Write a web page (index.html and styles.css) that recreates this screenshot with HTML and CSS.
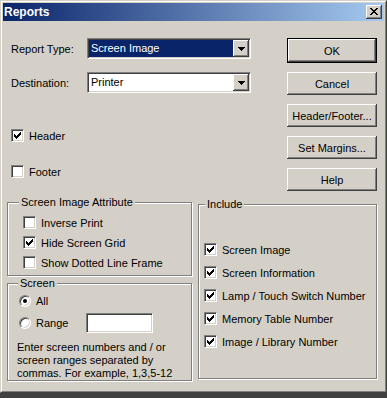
FILE: index.html
```html
<!DOCTYPE html>
<html lang="en">
<head>
  <meta charset="UTF-8" />
  <title>Reports</title>
  <link rel="stylesheet" href="styles.css">
</head>
<body>
  <div class="window">
    <div class="frame">
      <div class="titlebar">
        <span class="title">Reports</span>
        <span class="close">
          <svg width="8" height="7" viewBox="0 0 8 7"><path d="M0 0h2v1h-2zM6 0h2v1h-2zM1 1h2v1h-2zM5 1h2v1h-2zM2 2h4v1h-4zM3 3h2v1h-2zM2 4h4v1h-4zM1 5h2v1h-2zM5 5h2v1h-2zM0 6h2v1h-2zM6 6h2v1h-2z" fill="#000"/></svg>
        </span>
      </div>

      <div class="content">
        <div class="top">
          <div class="top-left">
            <div class="field-row">
              <span class="field-label">Report Type:</span>
              <div class="combo selected">
                <span class="combo-text">Screen Image</span>
                <span class="drop"><svg width="7" height="4" viewBox="0 0 7 4"><path d="M0 0h7v1h-7zM1 1h5v1h-5zM2 2h3v1h-3zM3 3h1v1h-1z" fill="#000"/></svg></span>
              </div>
            </div>
            <div class="field-row second">
              <span class="field-label">Destination:</span>
              <div class="combo">
                <span class="combo-text">Printer</span>
                <span class="drop"><svg width="7" height="4" viewBox="0 0 7 4"><path d="M0 0h7v1h-7zM1 1h5v1h-5zM2 2h3v1h-3zM3 3h1v1h-1z" fill="#000"/></svg></span>
              </div>
            </div>
            <div class="check-row header-row"><span class="checkbox"><svg width="7" height="7" viewBox="0 0 7 7"><path d="M6 0h1v1h-1zM5 1h2v1h-2zM0 2h1v1h-1zM4 2h3v1h-3zM0 3h2v1h-2zM3 3h3v1h-3zM0 4h5v1h-5zM1 5h3v1h-3zM2 6h1v1h-1z"/></svg></span>Header</div>
            <div class="check-row footer-row"><span class="checkbox"></span>Footer</div>
          </div>
          <div class="buttons">
            <button class="btn default">OK</button>
            <button class="btn">Cancel</button>
            <button class="btn">Header/Footer...</button>
            <button class="btn">Set Margins...</button>
            <button class="btn">Help</button>
          </div>
        </div>

        <div class="bottom">
          <div class="left-groups">
            <fieldset class="group attr">
              <legend>Screen Image Attribute</legend>
              <div class="group-body">
                <div class="check-row"><span class="checkbox"></span>Inverse Print</div>
                <div class="check-row"><span class="checkbox"><svg width="7" height="7" viewBox="0 0 7 7"><path d="M6 0h1v1h-1zM5 1h2v1h-2zM0 2h1v1h-1zM4 2h3v1h-3zM0 3h2v1h-2zM3 3h3v1h-3zM0 4h5v1h-5zM1 5h3v1h-3zM2 6h1v1h-1z"/></svg></span>Hide Screen Grid</div>
                <div class="check-row"><span class="checkbox"></span>Show Dotted Line Frame</div>
              </div>
            </fieldset>
            <fieldset class="group screen">
              <legend>Screen</legend>
              <div class="group-body">
                <div class="radio-row"><span class="radio checked"></span>All</div>
                <div class="radio-row range-row"><span class="radio"></span><span class="range-label">Range</span><span class="textbox"></span></div>
                <div class="hint">Enter screen numbers and / or<br>screen ranges separated by<br>commas. For example, 1,3,5-12</div>
              </div>
            </fieldset>
          </div>
          <fieldset class="group include">
            <legend>Include</legend>
            <div class="group-body">
              <div class="check-row"><span class="checkbox"><svg width="7" height="7" viewBox="0 0 7 7"><path d="M6 0h1v1h-1zM5 1h2v1h-2zM0 2h1v1h-1zM4 2h3v1h-3zM0 3h2v1h-2zM3 3h3v1h-3zM0 4h5v1h-5zM1 5h3v1h-3zM2 6h1v1h-1z"/></svg></span>Screen Image</div>
              <div class="check-row"><span class="checkbox"><svg width="7" height="7" viewBox="0 0 7 7"><path d="M6 0h1v1h-1zM5 1h2v1h-2zM0 2h1v1h-1zM4 2h3v1h-3zM0 3h2v1h-2zM3 3h3v1h-3zM0 4h5v1h-5zM1 5h3v1h-3zM2 6h1v1h-1z"/></svg></span>Screen Information</div>
              <div class="check-row"><span class="checkbox"><svg width="7" height="7" viewBox="0 0 7 7"><path d="M6 0h1v1h-1zM5 1h2v1h-2zM0 2h1v1h-1zM4 2h3v1h-3zM0 3h2v1h-2zM3 3h3v1h-3zM0 4h5v1h-5zM1 5h3v1h-3zM2 6h1v1h-1z"/></svg></span>Lamp / Touch Switch Number</div>
              <div class="check-row"><span class="checkbox"><svg width="7" height="7" viewBox="0 0 7 7"><path d="M6 0h1v1h-1zM5 1h2v1h-2zM0 2h1v1h-1zM4 2h3v1h-3zM0 3h2v1h-2zM3 3h3v1h-3zM0 4h5v1h-5zM1 5h3v1h-3zM2 6h1v1h-1z"/></svg></span>Memory Table Number</div>
              <div class="check-row"><span class="checkbox"><svg width="7" height="7" viewBox="0 0 7 7"><path d="M6 0h1v1h-1zM5 1h2v1h-2zM0 2h1v1h-1zM4 2h3v1h-3zM0 3h2v1h-2zM3 3h3v1h-3zM0 4h5v1h-5zM1 5h3v1h-3zM2 6h1v1h-1z"/></svg></span>Image / Library Number</div>
            </div>
          </fieldset>
        </div>
      </div>
    </div>
  </div>
</body>
</html>
```
FILE: styles.css
```css
body {
  margin: 0;
  background: #404040;
  font-family: 'Liberation Sans', Arial, sans-serif;
  font-size: 11px;
  color: #000;
}
.window {
  width: 387px;
  height: 393px;
  box-sizing: border-box;
  background: #d4d0c8;
  border: 1px solid;
  border-color: #d4d0c8 #404040 #404040 #d4d0c8;
}
.frame {
  height: 100%;
  box-sizing: border-box;
  border: 1px solid;
  border-color: #fff #808080 #808080 #fff;
  padding: 1px;
}
.titlebar {
  height: 18px;
  display: flex;
  align-items: center;
  justify-content: space-between;
  padding: 0 2px 0 1px;
  background: linear-gradient(to right, #0a246a, #a6caf0);
}
.title { color: #fff; font-weight: bold; font-size: 12px; }
.close {
  width: 16px;
  height: 14px;
  background: #d4d0c8;
  box-shadow: inset -1px -1px #404040, inset 1px 1px #fff, inset -2px -2px #808080;
}
.close svg { display: block; margin: 3px 0 0 4px; }

.content { padding: 17px 0 0 4px; }
.top { display: flex; }
.top-left { width: 276px; padding-left: 4px; }
.field-row { display: flex; align-items: center; height: 21px; }
.field-row.second { margin-top: 13px; }
.field-label { width: 76px; }
.combo {
  width: 164px;
  height: 21px;
  box-sizing: border-box;
  display: flex;
  padding: 1px;
  background: #fff;
  border: 1px solid;
  border-color: #808080 #fff #fff #808080;
  box-shadow: inset 1px 1px #404040, inset -1px -1px #d4d0c8;
}
.combo-text { flex: 1; padding-left: 2px; line-height: 17px; }
.selected .combo-text { background: #0a246a; color: #fff; }
.drop {
  width: 16px;
  height: 17px;
  background: #d4d0c8;
  box-shadow: inset -1px -1px #404040, inset 1px 1px #fff, inset -2px -2px #808080;
}
.drop svg { display: block; margin: 7px 0 0 5px; }

.check-row { display: flex; align-items: center; height: 13px; gap: 5px; }
.header-row { margin-top: 36px; }
.footer-row { margin-top: 23px; }
.checkbox {
  flex: none;
  width: 13px;
  height: 13px;
  box-sizing: border-box;
  background: #fff;
  border: 1px solid;
  border-color: #808080 #fff #fff #808080;
  box-shadow: inset 1px 1px #404040, inset -1px -1px #d4d0c8;
}
.checkbox svg { display: block; margin: 2px 0 0 2px; fill: #000; }

.buttons { width: 90px; display: flex; flex-direction: column; gap: 9px; }
.btn {
  width: 90px;
  height: 23px;
  padding: 0;
  border: none;
  font: inherit;
  color: #000;
  background: #d4d0c8;
  box-shadow: inset -1px -1px #404040, inset 1px 1px #fff, inset -2px -2px #808080, inset 2px 2px #d4d0c8;
}
.btn.default { height: 25px; border: 1px solid #000; }

.bottom { display: flex; align-items: flex-start; margin-top: 5px; }
.left-groups { width: 185px; flex: none; display: flex; flex-direction: column; }
.group {
  margin: 0;
  padding: 0;
  min-width: 0;
  box-sizing: border-box;
  border: 1px solid #808080;
  box-shadow: inset 1px 1px #fff, 1px 1px #fff;
}
.group legend { padding: 0 2px; line-height: 13px; background: #d4d0c8; }
.group-body { display: flex; flex-direction: column; }

.attr { width: 185px; height: 80px; }
.attr legend { margin-left: 11px; }
.attr .group-body { padding: 7px 0 0 15px; gap: 7px; }

.screen { width: 185px; height: 104px; margin-top: 1px; }
.screen legend { margin-left: 10px; }
.screen .group-body { padding: 5px 0 0 9px; }
.radio-row { display: flex; align-items: center; height: 12px; gap: 5px; padding-left: 2px; }
.range-row { height: 20px; margin-top: 6px; }
.radio {
  flex: none;
  width: 12px;
  height: 12px;
  box-sizing: border-box;
  border-radius: 50%;
  background: #fff;
  border: 1px solid;
  border-color: #808080 #fff #fff #808080;
  box-shadow: inset 1px 1px #404040, inset -1px -1px #d4d0c8;
}
.radio.checked::after {
  content: "";
  display: block;
  width: 4px;
  height: 4px;
  margin: 3px;
  border-radius: 50%;
  background: #000;
}
.range-label { width: 45px; }
.textbox {
  width: 67px;
  height: 20px;
  box-sizing: border-box;
  background: #fff;
  border: 1px solid;
  border-color: #808080 #fff #fff #808080;
  box-shadow: inset 1px 1px #404040, inset -1px -1px #d4d0c8;
}
.hint { margin-top: 8px; line-height: 13px; }

.include { flex: none; width: 179px; height: 181px; margin: 2px 0 0 6px; }
.include legend { margin-left: 6px; }
.include .group-body { padding: 32px 0 0 5px; gap: 10px; }
```
